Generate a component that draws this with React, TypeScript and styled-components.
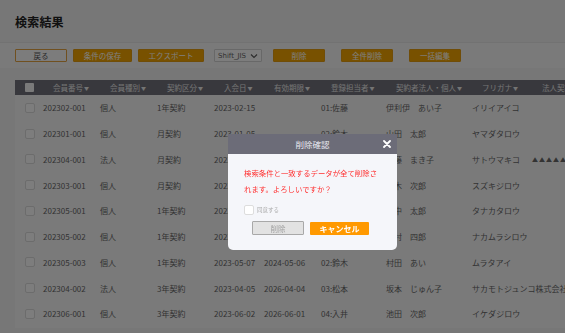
import React from 'react';
import styled, { createGlobalStyle } from 'styled-components';

const GlobalStyle = createGlobalStyle`
  html, body {
    margin: 0;
    padding: 0;
    overflow: hidden;
    background: #eeeeee;
    font-family: "Noto Sans CJK JP", "Noto Sans", sans-serif;
  }
`

const columns = [57, 57, 57, 50, 57, 65, 86, 60, 80]
const headers = ['会員番号', '会員種別', '契約区分', '入会日', '有効期限', '登録担当者', '契約者法人・個人', 'フリガナ', '法人契約']

const rows = [
  ['202302-001', '個人', '1年契約', '2023-02-15', '', '01:佐藤', '伊利伊　あい子', 'イリイアイコ', ''],
  ['202301-001', '個人', '月契約', '2023-01-05', '', '02:鈴木', '山田　太郎', 'ヤマダタロウ', ''],
  ['202304-001', '法人', '月契約', '2023-04-01', '', '03:松本', '佐藤　まき子', 'サトウマキコ', '▲▲▲▲▲▲'],
  ['202303-001', '個人', '月契約', '2023-03-10', '', '01:佐藤', '鈴木　次郎', 'スズキジロウ', ''],
  ['202305-001', '個人', '1年契約', '2023-05-01', '2024-04-30', '02:鈴木', '田中　太郎', 'タナカタロウ', ''],
  ['202305-002', '個人', '1年契約', '2023-05-03', '2024-05-02', '03:松本', '中村　四郎', 'ナカムラシロウ', ''],
  ['202305-003', '個人', '1年契約', '2023-05-07', '2024-05-06', '02:鈴木', '村田　あい', 'ムラタアイ', ''],
  ['202304-002', '法人', '3年契約', '2023-04-05', '2026-04-04', '03:松本', '坂本　じゅん子', 'サカモトジュンコ株式会社 •', ''],
  ['202306-001', '個人', '3年契約', '2023-06-02', '2026-06-01', '04:入井', '池田　次郎', 'イケダジロウ', ''],
]

function App() {
  return (
    <>
      <GlobalStyle />
      <Page>
        <TitleBar>
          <Title>検索結果</Title>
        </TitleBar>
        <Toolbar>
          <OutlineButton width={52}>戻る</OutlineButton>
          <OrangeButton width={59}>条件の保存</OrangeButton>
          <OrangeButton width={66}>エクスポート</OrangeButton>
          <Select>
            Shift_JIS
            <svg width="8" height="6" viewBox="0 0 8 6">
              <path d="M1 1.5 L4 4.5 L7 1.5" fill="none" stroke="#555" strokeWidth="1.1" />
            </svg>
          </Select>
          <OrangeButton width={52} gapLeft={5}>削除</OrangeButton>
          <OrangeButton width={52} gapLeft={10}>全件削除</OrangeButton>
          <OrangeButton width={52} gapLeft={10}>一括編集</OrangeButton>
        </Toolbar>
        <Content>
          <Table>
            <HeaderRow>
              <CheckCell>
                <HeaderCheck />
              </CheckCell>
              {headers.map((h, i) => (
                <HeaderCell key={h} style={{ width: columns[i] }}>
                  {h}
                  <Caret>▼</Caret>
                </HeaderCell>
              ))}
            </HeaderRow>
            {rows.map((r) => (
              <Row key={r[0]}>
                <CheckCell>
                  <RowCheck />
                </CheckCell>
                {r.map((v, i) => (
                  <Cell key={i} style={{ width: columns[i] }} small={i === 8}>
                    {v}
                  </Cell>
                ))}
              </Row>
            ))}
          </Table>
        </Content>
      </Page>
      <Overlay>
        <Modal>
          <ModalHeader>
            <ModalTitle>削除確認</ModalTitle>
            <Close>
              <svg width="8" height="8" viewBox="0 0 8 8">
                <path d="M1 1 L7 7 M7 1 L1 7" stroke="#fff" strokeWidth="1.8" strokeLinecap="round" />
              </svg>
            </Close>
          </ModalHeader>
          <ModalBody>
            <Message>
              検索条件と一致するデータが全て削除さ<br />
              れます。よろしいですか？
            </Message>
            <Agree>
              <AgreeBox />
              同意する
            </Agree>
            <ModalActions>
              <DisabledButton>削除</DisabledButton>
              <CancelButton>キャンセル</CancelButton>
            </ModalActions>
          </ModalBody>
        </Modal>
      </Overlay>
    </>
  );
}

export default App;

const Page = styled.div`
  width: 565px;
  height: 333px;
  display: flex;
  flex-direction: column;
`
const TitleBar = styled.div`
  height: 42px;
  padding: 0 15px;
  display: flex;
  align-items: center;
  background: #eeeeee;
`
const Title = styled.h1`
  margin: 0;
  font-size: 12px;
  font-weight: bold;
  color: #222;
  letter-spacing: 0.2px;
`
const Toolbar = styled.div`
  height: 26px;
  padding: 0 15px;
  display: flex;
  align-items: center;
  gap: 6px;
  background: #f4f4f4;
  border-top: 1px solid #e4e4e4;
  box-sizing: border-box;
`
const BaseButton = styled.div<{ width: number; gapLeft?: number }>`
  width: ${(p) => p.width}px;
  height: 13px;
  margin-left: ${(p) => p.gapLeft || 0}px;
  box-sizing: border-box;
  display: flex;
  align-items: center;
  justify-content: center;
  font-size: 7.5px;
  border-radius: 1px;
`
const OrangeButton = styled(BaseButton)`
  background: #f0a300;
  border: 1px solid #e09a10;
  color: #fff;
`
const OutlineButton = styled(BaseButton)`
  background: #f8f8f8;
  border: 1px solid #e0a040;
  color: #555;
`
const Select = styled.div`
  width: 48px;
  height: 13px;
  margin-left: 4px;
  box-sizing: border-box;
  border: 1px solid #d0d0d0;
  border-radius: 1px;
  background: #fafafa;
  color: #666;
  font-family: "DejaVu Sans", sans-serif;
  font-size: 7px;
  display: flex;
  align-items: center;
  justify-content: space-between;
  padding: 0 3px 0 3px;
`
const Content = styled.div`
  padding: 12px 0 0 15px;
  flex: 1;
  background: #eeeeee;
`
const Table = styled.div`
  width: 640px;
  background: #f5f5f5;
  padding-bottom: 1px;
`
const HeaderRow = styled.div`
  height: 15px;
  display: flex;
  align-items: center;
  background: #70707a;
`
const Row = styled.div`
  height: 25.75px;
  display: flex;
  align-items: center;
`
const CheckCell = styled.div`
  width: 23px;
  padding-left: 10px;
  box-sizing: border-box;
  display: flex;
  align-items: center;
`
const HeaderCheck = styled.div`
  width: 9px;
  height: 9px;
  background: #f4f4f4;
  border-radius: 1px;
`
const RowCheck = styled.div`
  width: 8px;
  height: 8px;
  border: 1px solid #d8d8d8;
  background: #fafafa;
  border-radius: 2px;
`
const HeaderCell = styled.div`
  padding-left: 15px;
  box-sizing: border-box;
  font-size: 7.5px;
  color: #e8e8e8;
  white-space: nowrap;
  overflow: hidden;
  flex-shrink: 0;
`
const Caret = styled.span`
  font-size: 5px;
  margin-left: 1px;
  vertical-align: 1px;
`
const Cell = styled.div<{ small?: boolean }>`
  padding-left: 5px;
  box-sizing: border-box;
  font-size: ${(p) => (p.small ? '6px' : '8px')};
  letter-spacing: ${(p) => (p.small ? '1px' : '0')};
  color: #666;
  white-space: nowrap;
  flex-shrink: 0;
`
const Overlay = styled.div`
  position: fixed;
  inset: 0;
  background: rgba(0, 0, 0, 0.5);
`
const Modal = styled.div`
  position: absolute;
  left: 228px;
  top: 134px;
  width: 169px;
  height: 116px;
  background: #f5f6fa;
  border-radius: 0 0 5px 5px;
  overflow: hidden;
  display: flex;
  flex-direction: column;
`
const ModalHeader = styled.div`
  height: 20px;
  background: #6c6c78;
  position: relative;
  display: flex;
  align-items: center;
  justify-content: center;
`
const ModalTitle = styled.div`
  font-size: 8.5px;
  color: #e8e8f0;
`
const Close = styled.div`
  position: absolute;
  right: 6px;
  top: 6px;
  display: flex;
`
const ModalBody = styled.div`
  padding: 11px 16px 0 16px;
  display: flex;
  flex-direction: column;
`
const Message = styled.div`
  color: #ff2f2f;
  font-size: 7.4px;
  line-height: 16px;
  white-space: nowrap;
`
const Agree = styled.div`
  margin-top: 8px;
  display: flex;
  align-items: center;
  gap: 3px;
  font-size: 5.5px;
  color: #aaa;
`
const AgreeBox = styled.div`
  width: 8px;
  height: 8px;
  border: 1px solid #ddd;
  background: #fff;
  border-radius: 2px;
`
const ModalActions = styled.div`
  margin-top: 6px;
  display: flex;
  gap: 6px;
  padding-left: 8px;
`
const DisabledButton = styled.div`
  width: 52px;
  height: 14px;
  box-sizing: border-box;
  background: #e2e2e2;
  border: 1px solid #a8a8a8;
  border-radius: 1px;
  color: #a0a0a0;
  font-size: 7.5px;
  display: flex;
  align-items: center;
  justify-content: center;
`
const CancelButton = styled.div`
  width: 59px;
  height: 13px;
  margin-top: 1px;
  background: #ff9900;
  border-radius: 1px;
  color: #fff;
  font-size: 8px;
  font-weight: bold;
  display: flex;
  align-items: center;
  justify-content: center;
`
